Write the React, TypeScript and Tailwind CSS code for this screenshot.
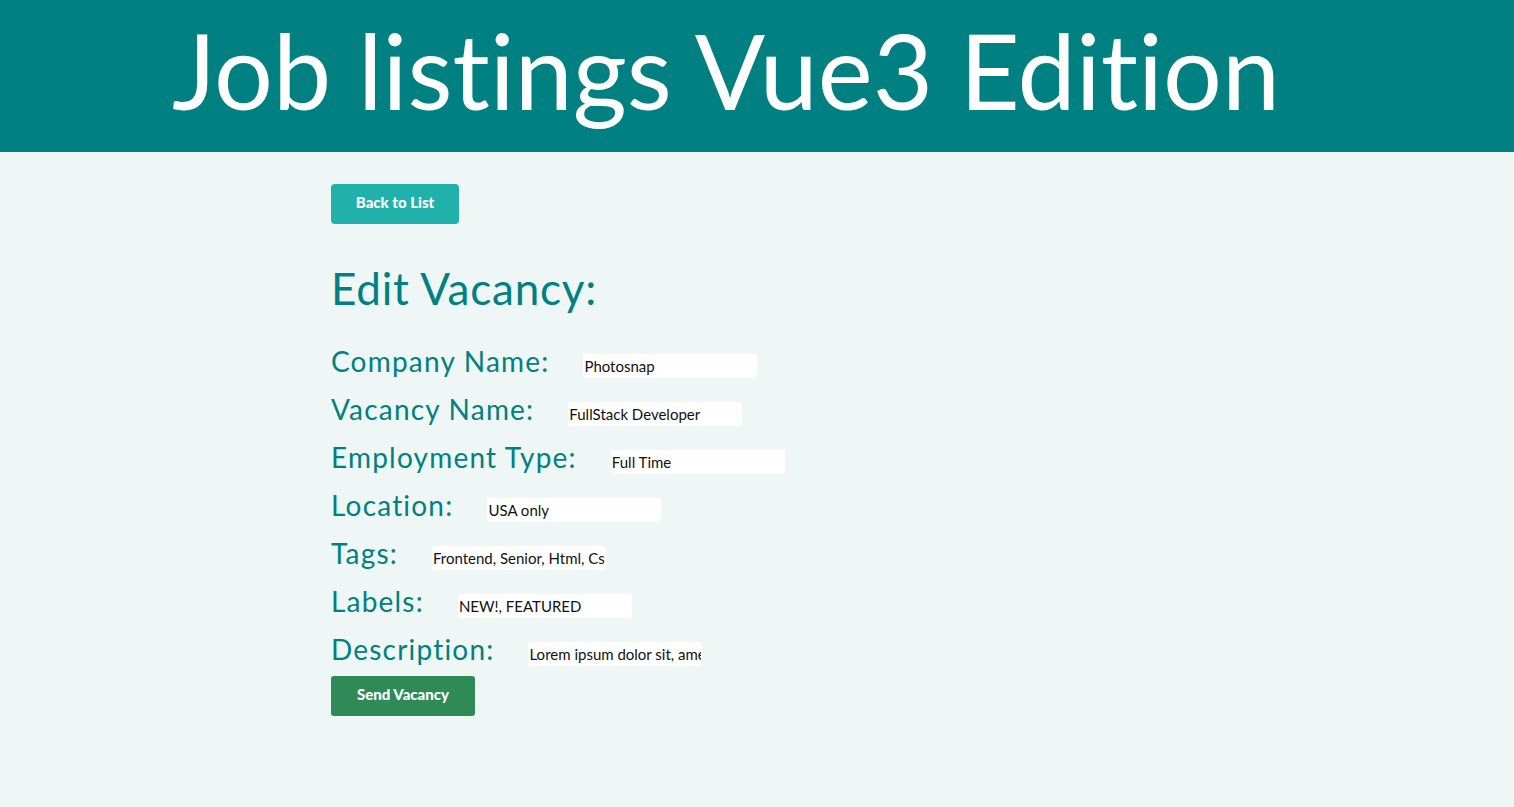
import React from "react";

const FIELDS = [
  { label: "Company Name:", value: "Photosnap" },
  { label: "Vacancy Name:", value: "FullStack Developer" },
  { label: "Employment Type:", value: "Full Time" },
  { label: "Location:", value: "USA only" },
  { label: "Tags:", value: "Frontend, Senior, Html, Css" },
  { label: "Labels:", value: "NEW!, FEATURED" },
  { label: "Description:", value: "Lorem ipsum dolor sit, amet consectetur" },
];

export default function App() {
  return (
    <div className="min-h-[807px] bg-[#eef7f5] font-['Lato',sans-serif] [font-variant-ligatures:none]">
      <header className="flex h-[152px] items-center justify-center bg-[#008080] pr-[62px]">
        <h1 className="pb-[12px] text-[104px] leading-none font-normal text-white">Job listings Vue3 Edition</h1>
      </header>

      <main className="pl-[331px] pt-[32px]">
        <button className="h-[40px] w-[128px] rounded-[4px] bg-[#20b2aa] pb-[4px] text-[15px] font-black text-white">
          Back to List
        </button>

        <h2 className="mt-[38px] text-[44px] leading-[52px] tracking-[0.8px] text-[#008080]">Edit Vacancy:</h2>

        <form className="mt-[23px] flex flex-col" onSubmit={(e) => e.preventDefault()}>
          {FIELDS.map((f) => (
            <div key={f.label} className="flex h-[48px] items-baseline">
              <label className="text-[28px] leading-[48px] tracking-[1.2px] text-[#008080]">{f.label}</label>
              <input
                defaultValue={f.value}
                className="ml-[34px] h-[24px] w-[174px] rounded-[3px] bg-white px-[1px] text-[15px] text-[#111] outline-none"
              />
            </div>
          ))}
          <div>
            <button className="mt-[3px] h-[40px] w-[144px] rounded-[3px] bg-[#2e8b57] pb-[4px] text-[15px] font-black text-white">
              Send Vacancy
            </button>
          </div>
        </form>
      </main>
    </div>
  );
}
